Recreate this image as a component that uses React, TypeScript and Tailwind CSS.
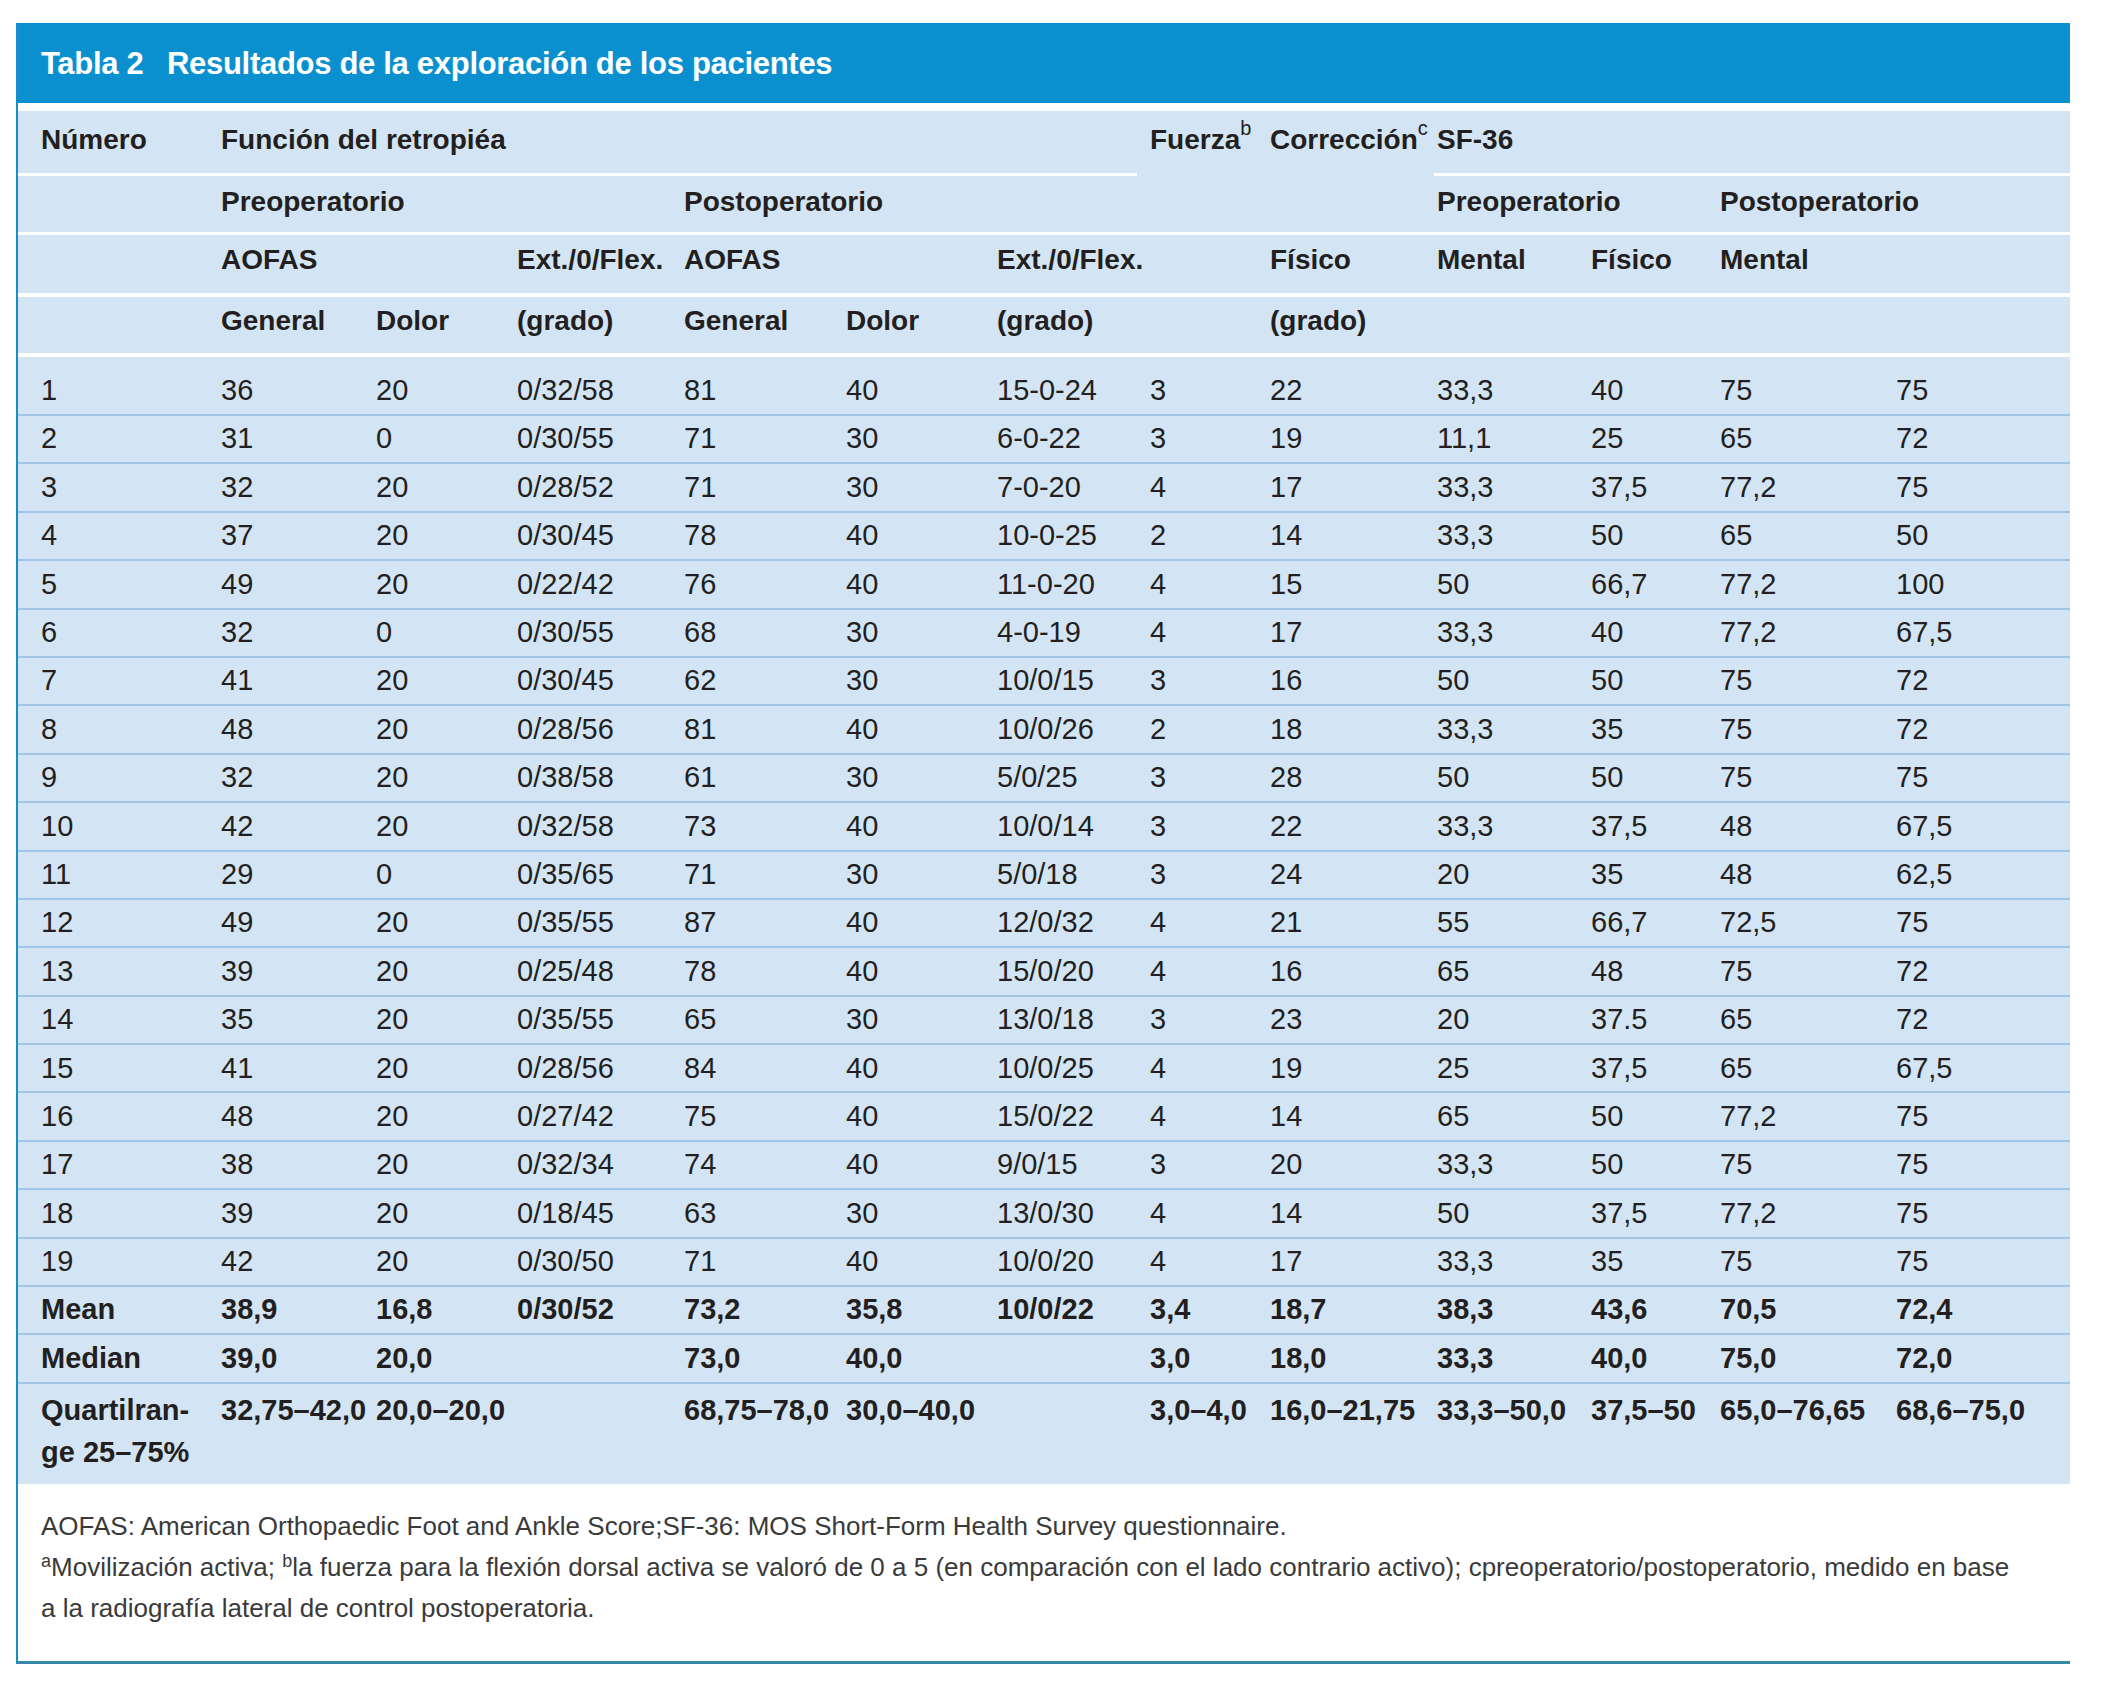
import React from 'react'

const grid =
  'grid grid-cols-[203px_155px_141px_167px_162px_151px_153px_120px_167px_154px_129px_176px_174px]'

const rows: string[][] = [
  ['1', '36', '20', '0/32/58', '81', '40', '15-0-24', '3', '22', '33,3', '40', '75', '75'],
  ['2', '31', '0', '0/30/55', '71', '30', '6-0-22', '3', '19', '11,1', '25', '65', '72'],
  ['3', '32', '20', '0/28/52', '71', '30', '7-0-20', '4', '17', '33,3', '37,5', '77,2', '75'],
  ['4', '37', '20', '0/30/45', '78', '40', '10-0-25', '2', '14', '33,3', '50', '65', '50'],
  ['5', '49', '20', '0/22/42', '76', '40', '11-0-20', '4', '15', '50', '66,7', '77,2', '100'],
  ['6', '32', '0', '0/30/55', '68', '30', '4-0-19', '4', '17', '33,3', '40', '77,2', '67,5'],
  ['7', '41', '20', '0/30/45', '62', '30', '10/0/15', '3', '16', '50', '50', '75', '72'],
  ['8', '48', '20', '0/28/56', '81', '40', '10/0/26', '2', '18', '33,3', '35', '75', '72'],
  ['9', '32', '20', '0/38/58', '61', '30', '5/0/25', '3', '28', '50', '50', '75', '75'],
  ['10', '42', '20', '0/32/58', '73', '40', '10/0/14', '3', '22', '33,3', '37,5', '48', '67,5'],
  ['11', '29', '0', '0/35/65', '71', '30', '5/0/18', '3', '24', '20', '35', '48', '62,5'],
  ['12', '49', '20', '0/35/55', '87', '40', '12/0/32', '4', '21', '55', '66,7', '72,5', '75'],
  ['13', '39', '20', '0/25/48', '78', '40', '15/0/20', '4', '16', '65', '48', '75', '72'],
  ['14', '35', '20', '0/35/55', '65', '30', '13/0/18', '3', '23', '20', '37.5', '65', '72'],
  ['15', '41', '20', '0/28/56', '84', '40', '10/0/25', '4', '19', '25', '37,5', '65', '67,5'],
  ['16', '48', '20', '0/27/42', '75', '40', '15/0/22', '4', '14', '65', '50', '77,2', '75'],
  ['17', '38', '20', '0/32/34', '74', '40', '9/0/15', '3', '20', '33,3', '50', '75', '75'],
  ['18', '39', '20', '0/18/45', '63', '30', '13/0/30', '4', '14', '50', '37,5', '77,2', '75'],
  ['19', '42', '20', '0/30/50', '71', '40', '10/0/20', '4', '17', '33,3', '35', '75', '75'],
]

const mean = ['Mean', '38,9', '16,8', '0/30/52', '73,2', '35,8', '10/0/22', '3,4', '18,7', '38,3', '43,6', '70,5', '72,4']
const median = ['Median', '39,0', '20,0', '', '73,0', '40,0', '', '3,0', '18,0', '33,3', '40,0', '75,0', '72,0']
const quartil = ['32,75–42,0', '20,0–20,0', '', '68,75–78,0', '30,0–40,0', '', '3,0–4,0', '16,0–21,75', '33,3–50,0', '37,5–50', '65,0–76,65', '68,6–75,0']

function Cells({ values, first = true }: { values: string[]; first?: boolean }) {
  return (
    <>
      {values.map((v, i) => (
        <div key={i} className={first && i === 0 ? 'pl-[23px] whitespace-nowrap' : 'whitespace-nowrap'}>
          {v}
        </div>
      ))}
    </>
  )
}

function Hd({ children, line = true, className = '' }: { children?: React.ReactNode; line?: boolean; className?: string }) {
  return (
    <div
      className={`flex items-center whitespace-nowrap ${line ? 'border-b-white' : 'border-b-transparent'} ${className}`}
    >
      {children}
    </div>
  )
}

export default function App() {
  return (
    <div className="min-h-screen bg-white font-['Liberation_Sans',Arial,sans-serif] text-[#231f20]">
      <div className="pt-[23px] pl-[16px] pb-[30px]">
        <div className="w-[2054px] border-l-2 border-l-[#1a8cc8] border-b-[3px] border-b-[#3589a6]">
          {/* title bar */}
          <div className="h-[80px] bg-[#0b90cf] flex items-center pl-[23px] pt-[2px] text-white font-bold text-[31px] tracking-[-0.3px]">
            <span className="w-[126px]">Tabla 2</span>
            <span>Resultados de la exploración de los pacientes</span>
          </div>
          <div className="h-[8px] bg-white" />

          <div className="bg-[#d3e5f4]">
            {/* header rows */}
            <div className="font-bold text-[28px]">
              <div className={`${grid} h-[65px] [&>div]:border-b-[3px] [&>div]:pb-[4px]`}>
                <Hd className="pl-[23px]">Número</Hd>
                <Hd className="col-span-6 mr-[13px]">Función del retropiéa</Hd>
                <Hd line={false}>
                  Fuerza<sup className="font-normal text-[20px] -top-[0.6em]">b</sup>
                </Hd>
                <Hd line={false}>
                  Corrección<sup className="font-normal text-[20px] -top-[0.6em]">c</sup>
                </Hd>
                <Hd className="col-span-4 -ml-[3px] pl-[3px]">SF-36</Hd>
              </div>
              <div className={`${grid} h-[59px] [&>div]:border-b-[3px] [&>div]:pb-[5px]`}>
                <Hd />
                <Hd className="col-span-3">Preoperatorio</Hd>
                <Hd className="col-span-3">Postoperatorio</Hd>
                <Hd />
                <Hd />
                <Hd className="col-span-2">Preoperatorio</Hd>
                <Hd className="col-span-2">Postoperatorio</Hd>
              </div>
              <div className={`${grid} h-[62px] [&>div]:border-b-4 [&>div]:pb-[8px]`}>
                <Hd />
                <Hd className="col-span-2">AOFAS</Hd>
                <Hd>Ext./0/Flex.</Hd>
                <Hd className="col-span-2">AOFAS</Hd>
                <Hd>Ext./0/Flex.</Hd>
                <Hd />
                <Hd>Físico</Hd>
                <Hd>Mental</Hd>
                <Hd>Físico</Hd>
                <Hd>Mental</Hd>
                <Hd />
              </div>
              <div className={`${grid} h-[60px] [&>div]:border-b-4 [&>div]:pb-[8px]`}>
                <Hd />
                <Hd>General</Hd>
                <Hd>Dolor</Hd>
                <Hd>(grado)</Hd>
                <Hd>General</Hd>
                <Hd>Dolor</Hd>
                <Hd>(grado)</Hd>
                <Hd />
                <Hd>(grado)</Hd>
                <Hd />
                <Hd />
                <Hd />
                <Hd />
              </div>
            </div>

            {/* data rows */}
            <div className="text-[29px]">
              {rows.map((r, i) => (
                <div
                  key={r[0]}
                  className={`${grid} items-center border-b-2 border-[#a3c6e6] ${
                    i === 0 ? 'h-[59px] pt-[11px]' : 'h-[48.4px]'
                  }`}
                >
                  <Cells values={r} />
                </div>
              ))}
            </div>

            <div className="text-[29px] font-bold">
              <div className={`${grid} items-center h-[48px] border-b-2 border-[#a3c6e6]`}>
                <Cells values={mean} />
              </div>
              <div className={`${grid} items-center h-[49px] border-b-2 border-[#a3c6e6]`}>
                <Cells values={median} />
              </div>
              <div className={`${grid} h-[100px] pt-[5px] leading-[42px]`}>
                <div className="pl-[23px]">
                  Quartilran-
                  <br />
                  ge 25–75%
                </div>
                <Cells values={quartil} first={false} />
              </div>
            </div>
          </div>

          {/* footnotes */}
          <div className="pl-[23px] pt-[22px] pb-[32px] text-[26px] leading-[41px] text-[#3a3a3a] whitespace-nowrap">
            <div>AOFAS: American Orthopaedic Foot and Ankle Score;SF-36: MOS Short-Form Health Survey questionnaire.</div>
            <div>
              <sup className="text-[18px]">a</sup>Movilización activa; <sup className="text-[18px]">b</sup>la fuerza para la
              flexión dorsal activa se valoró de 0 a 5 (en comparación con el lado contrario activo);
              cpreoperatorio/postoperatorio, medido en base
            </div>
            <div>a la radiografía lateral de control postoperatoria.</div>
          </div>
        </div>
      </div>
    </div>
  )
}
